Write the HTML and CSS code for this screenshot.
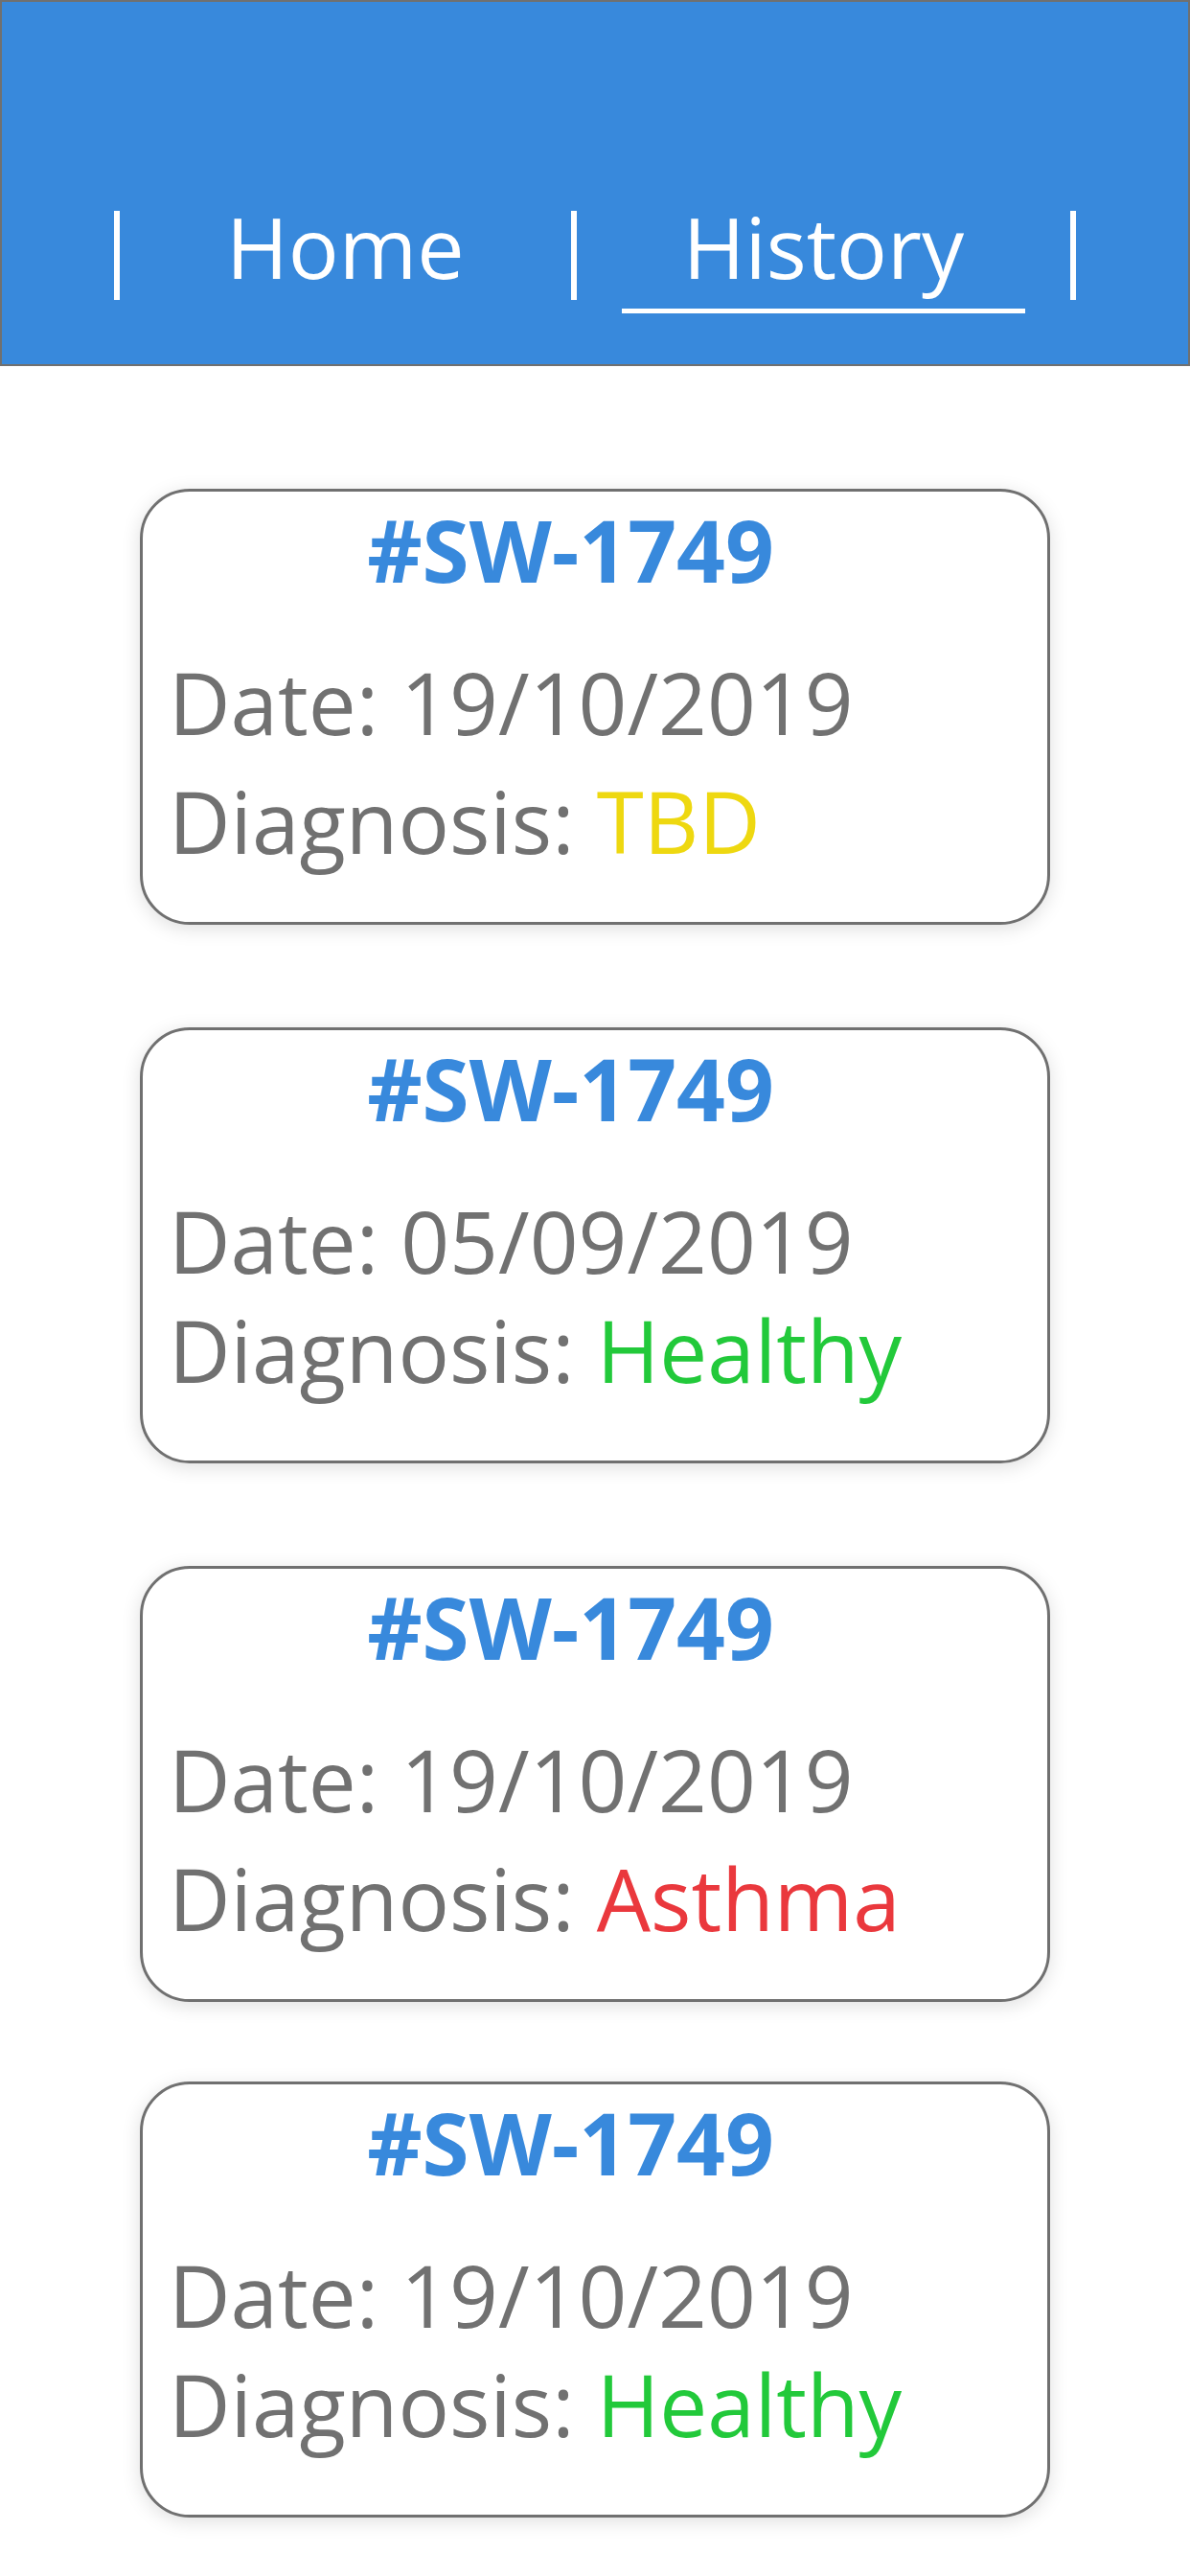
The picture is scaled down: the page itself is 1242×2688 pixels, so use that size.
FILE: index.html
```html
<!DOCTYPE html>
<html lang="en">
<head>
<meta charset="utf-8">
<title>History</title>
<link rel="stylesheet" href="styles.css">
</head>
<body>
<header class="header">
  <nav class="nav">
    <span class="sep"></span>
    <a class="nav-link">Home</a>
    <span class="sep"></span>
    <a class="nav-link nav-link--active">History</a>
    <span class="sep"></span>
  </nav>
</header>
<main class="list">
  <section class="card">
    <h2 class="card-title">#SW-1749</h2>
    <p class="card-line">Date: 19/10/2019</p>
    <p class="card-line">Diagnosis: <span class="status status--tbd">TBD</span></p>
  </section>
  <section class="card">
    <h2 class="card-title">#SW-1749</h2>
    <p class="card-line">Date: 05/09/2019</p>
    <p class="card-line card-line--close">Diagnosis: <span class="status status--healthy">Healthy</span></p>
  </section>
  <section class="card">
    <h2 class="card-title">#SW-1749</h2>
    <p class="card-line">Date: 19/10/2019</p>
    <p class="card-line">Diagnosis: <span class="status status--asthma">Asthma</span></p>
  </section>
  <section class="card card--tight">
    <h2 class="card-title">#SW-1749</h2>
    <p class="card-line">Date: 19/10/2019</p>
    <p class="card-line card-line--close">Diagnosis: <span class="status status--healthy">Healthy</span></p>
  </section>
</main>
</body>
</html>
```
FILE: styles.css
```css
* { box-sizing: border-box; }

html, body {
  margin: 0;
  padding: 0;
  background: #ffffff;
}

body {
  font-family: "Open Sans", "Noto Sans", "Liberation Sans", sans-serif;
  width: 1242px;
  min-height: 2688px;
}

.header {
  background: #3889dc;
  border: 2px solid #707070;
  height: 382px;
  padding-top: 205px;
}

.nav {
  display: flex;
  justify-content: center;
  align-items: flex-start;
}

.sep {
  width: 6px;
  height: 93px;
  margin-top: 13px;
  background: #ffffff;
  flex: none;
}

.nav-link {
  color: #ffffff;
  font-size: 88px;
  line-height: 100px;
  margin: 0 47px;
  padding: 0 64px 15px;
  border-bottom: 5px solid transparent;
}

.nav-link--active {
  border-bottom-color: #ffffff;
}

.list {
  display: flex;
  flex-direction: column;
  align-items: center;
  padding-top: 128px;
  gap: 107px;
}

.card {
  width: 950px;
  height: 455px;
  border: 3px solid #707070;
  border-radius: 52px;
  background: #ffffff;
  box-shadow: 0 4px 20px rgba(0, 0, 0, 0.13);
  padding: 8px 26px 0 27px;
}

.card--tight {
  margin-top: -24px;
}

.card-title {
  margin: 0;
  padding-right: 52px;
  text-align: center;
  color: #3889dc;
  font-size: 89px;
  font-weight: 700;
  line-height: 105px;
}

.card-line {
  margin: 0;
  color: #717171;
  font-size: 89px;
  line-height: 124px;
}

.card-line:first-of-type {
  margin-top: 45px;
}

.card-line--close {
  margin-top: -10px;
}

.status--tbd { color: #eed810; }
.status--healthy { color: #22c93a; }
.status--asthma { color: #ea383d; }
```
